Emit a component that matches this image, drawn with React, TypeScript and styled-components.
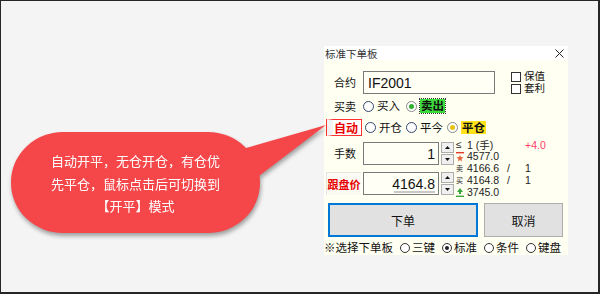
import React from 'react';
import styled, { createGlobalStyle } from 'styled-components';

const cjk = `"Noto Sans CJK SC", "Microsoft YaHei", sans-serif`;
const latin = `"Liberation Sans", Arial, "Noto Sans CJK SC", sans-serif`;

const GlobalStyle = createGlobalStyle`
    body {
        margin: 0;
        background: #f4f4f4;
        font-family: ${cjk};
    }
`;

const Page = styled.div`
    position: relative;
    box-sizing: border-box;
    width: 600px;
    height: 294px;
    border: 1px solid #262626;
    border-width: 1px 2px 2px 1px;
    background: #f4f4f4;
    padding: 45px 0 0 323px;
`;

const Panel = styled.div`
    width: 244px;
    height: 209px;
    display: flex;
    flex-direction: column;
    font-family: ${cjk};
    color: #111;
`;

const TitleBar = styled.div`
    height: 14px;
    background: #fff;
    display: flex;
    align-items: center;
    justify-content: space-between;
    padding: 0 4px 0 1px;
    font-size: 10.5px;
    color: #333;
`;

const Body = styled.div`
    flex: 1;
    background: #fffff2;
    padding: 11px 4px 0 2px;
    display: flex;
    flex-direction: column;
`;

const Row = styled.div<{ $top?: number; $h: number }>`
    display: flex;
    align-items: center;
    height: ${p => p.$h}px;
    margin-top: ${p => p.$top || 0}px;
`;

const FieldLabel = styled.div`
    box-sizing: border-box;
    width: 37px;
    flex: none;
    padding-left: 8px;
    font-size: 11px;
    line-height: 1;
`;

const ContractInput = styled.div`
    box-sizing: border-box;
    width: 132px;
    height: 23px;
    border: 1px solid #7a7a7a;
    background: #fffff6;
    padding-left: 4px;
    display: flex;
    align-items: center;
    font-family: ${latin};
    font-size: 14px;
`;

const CheckCol = styled.div`
    margin-left: 16px;
    display: flex;
    flex-direction: column;
    gap: 1.5px;
`;

const CheckItem = styled.label`
    display: flex;
    align-items: center;
    gap: 3px;
    height: 10.5px;
    font-size: 10.5px;
    line-height: 10.5px;
`;

const CheckBox = styled.span`
    box-sizing: border-box;
    width: 10px;
    height: 10px;
    border: 1px solid #333;
    background: #fff;
`;

const RadioItem = styled.span<{ $gap?: number }>`
    display: inline-flex;
    align-items: center;
    gap: 3px;
    margin-right: ${p => p.$gap ?? 4}px;
    font-size: 11.5px;
    line-height: 1;
`;

const RadioDot = styled.span<{ $ring: string; $dot?: string }>`
    position: relative;
    box-sizing: border-box;
    width: 11px;
    height: 11px;
    flex: none;
    border-radius: 50%;
    border: 1px solid ${p => p.$ring};
    background: #fff;

    &::after {
        content: '';
        display: ${p => (p.$dot ? 'block' : 'none')};
        position: absolute;
        left: 2px;
        top: 2px;
        width: 5px;
        height: 5px;
        border-radius: 50%;
        background: ${p => p.$dot};
    }
`;

const RadioText = styled.span<{ $bg?: string }>`
    background: ${p => p.$bg || 'transparent'};
    font-weight: ${p => (p.$bg ? 700 : 400)};
    padding: ${p => (p.$bg ? '1px 1px' : '0')};
    outline: ${p => (p.$bg === '#3ddc3d' ? '1px dotted #333' : 'none')};
`;

const AutoBox = styled.div`
    box-sizing: border-box;
    width: 35px;
    height: 17px;
    margin-right: 3px;
    border: 1px solid #ff3030;
    border-left-width: 6px;
    border-left-color: #f2f2f2;
    box-shadow: -1px 0 0 #ff3030;
    margin-left: 1px;
    background: #fff;
    color: #e80000;
    font-weight: 700;
    font-size: 12px;
    display: flex;
    align-items: center;
    justify-content: center;
    padding-right: 2px;
`;

const Section = styled.div`
    display: flex;
    height: 60px;
`;

const LeftCol = styled.div`
    display: flex;
    flex-direction: column;
    gap: 7px;
    padding-top: 6px;
`;

const PriceLabel = styled.div`
    box-sizing: border-box;
    width: 35px;
    height: 23px;
    margin-right: 2px;
    border-left: 1px solid #e4e4e4;
    border-top: 1px solid #e4e4e4;
    background: #fbfbf4;
    color: #e80000;
    font-size: 11px;
    font-weight: 700;
    display: flex;
    align-items: center;
    justify-content: center;
`;

const SpinBox = styled.div`
    display: flex;
    gap: 2px;
    height: 23px;
`;

const SpinField = styled.div`
    position: relative;
    box-sizing: border-box;
    width: 76px;
    border: 1px solid #7a7a7a;
    background: #fffff6;
    padding-right: 3px;
    display: flex;
    align-items: center;
    justify-content: flex-end;
    font-family: ${latin};
    font-size: 14px;
`;

const ScrollMark = styled.span`
    position: absolute;
    left: 30px;
    right: 3px;
    bottom: 1px;
    height: 2px;
    background: #c8c8c8;
`;

const Spinner = styled.div`
    width: 13px;
    display: flex;
    flex-direction: column;
    gap: 1px;
`;

const SpinButton = styled.div`
    flex: 1;
    box-sizing: border-box;
    border: 1px solid #adadad;
    background: #f0f0f0;
    display: flex;
    align-items: center;
    justify-content: center;
`;

const InfoCol = styled.div`
    margin-left: 1px;
    padding-top: 1px;
    display: flex;
    flex-direction: column;
    font-family: ${latin};
    font-size: 10.5px;
    color: #222;
`;

const InfoLine = styled.div`
    display: grid;
    grid-template-columns: 12px 40px 18px auto;
    align-items: center;
    height: 13px;
`;

const InfoIcon = styled.span<{ $big?: boolean }>`
    display: flex;
    align-items: center;
    justify-content: flex-start;
    padding-left: 1px;
    font-family: ${p => (p.$big ? latin : cjk)};
    font-size: ${p => (p.$big ? 10 : 7)}px;
    line-height: 1;
`;

const Change = styled.span`
    color: #ff3b6b;
`;

const ButtonRow = styled.div`
    display: flex;
    gap: 6px;
    margin-top: 7px;
    padding-left: 2px;
`;

const ActionButton = styled.button<{ $primary?: boolean }>`
    box-sizing: border-box;
    width: ${p => (p.$primary ? 150 : 79)}px;
    height: 34px;
    border: ${p => (p.$primary ? '2px solid #0078d7' : '1px solid #adadad')};
    background: #e1e1e1;
    font-family: ${cjk};
    font-size: 12px;
    color: #111;
    padding: 0;
`;

const BoardRow = styled.div`
    display: flex;
    align-items: center;
    height: 14px;
    margin: 4px -4px 0 -2px;
    font-size: 11.5px;
    line-height: 1;
    color: #111;
    gap: 7px;
    white-space: nowrap;
`;

const BoardItem = styled.span`
    flex: none;
    display: inline-flex;
    align-items: center;
    gap: 2px;
`;

const BoardDot = styled(RadioDot)`
    width: 10px;
    height: 10px;

    &::after {
        left: 2px;
        top: 2px;
        width: 4px;
        height: 4px;
    }
`;

const Callout = styled.div`
    position: absolute;
    left: 10px;
    top: 119px;
    width: 320px;
    height: 118px;
    filter: drop-shadow(1px 3px 2px rgba(0, 0, 0, 0.35));
`;

const Tail = styled.svg`
    position: absolute;
    left: 0;
    top: 0;
`;

const Bubble = styled.div`
    position: absolute;
    left: 0;
    top: 12px;
    width: 249px;
    height: 101px;
    border-radius: 52px / 50px;
    background: #f5474a;
    color: #fff;
    font-size: 13px;
    line-height: 22.5px;
    display: flex;
    flex-direction: column;
    align-items: center;
    justify-content: center;
    padding-top: 3px;
    box-sizing: border-box;
`;

const CloseIcon = () => (
    <svg width="9" height="9" viewBox="0 0 9 9">
        <path d="M0.5 0.5 L8.5 8.5 M8.5 0.5 L0.5 8.5" stroke="#222" strokeWidth="1" />
    </svg>
);

const Arrow = ({ up }: { up?: boolean }) => (
    <svg width="5" height="3" viewBox="0 0 5 3">
        <path d={up ? 'M0 3 L2.5 0 L5 3 Z' : 'M0 0 L2.5 3 L5 0 Z'} fill="#111" />
    </svg>
);

const LimitUp = () => (
    <svg width="8" height="11" viewBox="0 0 8 11">
        <rect x="0" y="1" width="8" height="1.4" fill="#e23b2e" />
        <path d="M4 4 L5 6 L7.5 6.5 L5.5 8 L6 10.5 L4 9 L2 10.5 L2.5 8 L0.5 6.5 L3 6 Z" fill="#e8643a" />
    </svg>
);

const LimitDown = () => (
    <svg width="8" height="11" viewBox="0 0 8 11">
        <path d="M4 1 L7 5 L5 5 L5 7 L3 7 L3 5 L1 5 Z" fill="#3aa53a" />
        <rect x="0" y="8.6" width="8" height="1.4" fill="#3aa53a" />
    </svg>
);

const Spin = () => (
    <Spinner>
        <SpinButton><Arrow up /></SpinButton>
        <SpinButton><Arrow /></SpinButton>
    </Spinner>
);

const App: React.FC = () => {
    return (
        <>
            <GlobalStyle />
            <Page>
                <Panel>
                    <TitleBar>
                        <span>标准下单板</span>
                        <CloseIcon />
                    </TitleBar>
                    <Body>
                        <Row $h={23}>
                            <FieldLabel>合约</FieldLabel>
                            <ContractInput>IF2001</ContractInput>
                            <CheckCol>
                                <CheckItem><CheckBox />保值</CheckItem>
                                <CheckItem><CheckBox />套利</CheckItem>
                            </CheckCol>
                        </Row>
                        <Row $h={14} $top={5}>
                            <FieldLabel>买卖</FieldLabel>
                            <RadioItem $gap={6}><RadioDot $ring="#34466e" />买入</RadioItem>
                            <RadioItem>
                                <RadioDot $ring="#8a8a8a" $dot="#2fae2f" />
                                <RadioText $bg="#3ddc3d">卖出</RadioText>
                            </RadioItem>
                        </Row>
                        <Row $h={17} $top={6}>
                            <AutoBox>自动</AutoBox>
                            <RadioItem><RadioDot $ring="#34466e" />开仓</RadioItem>
                            <RadioItem><RadioDot $ring="#34466e" />平今</RadioItem>
                            <RadioItem>
                                <RadioDot $ring="#8a8a8a" $dot="#e8c20c" />
                                <RadioText $bg="#ffe21a">平仓</RadioText>
                            </RadioItem>
                        </Row>
                        <Section>
                            <LeftCol>
                                <Row $h={23}>
                                    <FieldLabel>手数</FieldLabel>
                                    <SpinBox>
                                        <SpinField>1</SpinField>
                                        <Spin />
                                    </SpinBox>
                                </Row>
                                <Row $h={23}>
                                    <PriceLabel>跟盘价</PriceLabel>
                                    <SpinBox>
                                        <SpinField>4164.8<ScrollMark /></SpinField>
                                        <Spin />
                                    </SpinBox>
                                </Row>
                            </LeftCol>
                            <InfoCol>
                                <InfoLine>
                                    <InfoIcon $big>≤</InfoIcon>
                                    <span>1 (手)</span>
                                    <span />
                                    <Change>+4.0</Change>
                                </InfoLine>
                                <InfoLine>
                                    <InfoIcon><LimitUp /></InfoIcon>
                                    <span>4577.0</span>
                                </InfoLine>
                                <InfoLine>
                                    <InfoIcon>卖</InfoIcon>
                                    <span>4166.6</span>
                                    <span>/</span>
                                    <span>1</span>
                                </InfoLine>
                                <InfoLine>
                                    <InfoIcon>买</InfoIcon>
                                    <span>4164.8</span>
                                    <span>/</span>
                                    <span>1</span>
                                </InfoLine>
                                <InfoLine>
                                    <InfoIcon><LimitDown /></InfoIcon>
                                    <span>3745.0</span>
                                </InfoLine>
                            </InfoCol>
                        </Section>
                        <ButtonRow>
                            <ActionButton $primary>下单</ActionButton>
                            <ActionButton>取消</ActionButton>
                        </ButtonRow>
                        <BoardRow>
                            <span>※选择下单板</span>
                            <BoardItem><BoardDot $ring="#333" />三键</BoardItem>
                            <BoardItem><BoardDot $ring="#333" $dot="#222" />标准</BoardItem>
                            <BoardItem><BoardDot $ring="#333" />条件</BoardItem>
                            <BoardItem><BoardDot $ring="#333" />键盘</BoardItem>
                        </BoardRow>
                    </Body>
                </Panel>
                <Callout>
                    <Tail width="320" height="118" viewBox="0 0 320 118">
                        <polygon points="228,30 315,5 248,56" fill="#f5474a" />
                    </Tail>
                    <Bubble>
                        <span>自动开平，无仓开仓，有仓优</span>
                        <span>先平仓，鼠标点击后可切换到</span>
                        <span>【开平】模式</span>
                    </Bubble>
                </Callout>
            </Page>
        </>
    );
};

export default App;
